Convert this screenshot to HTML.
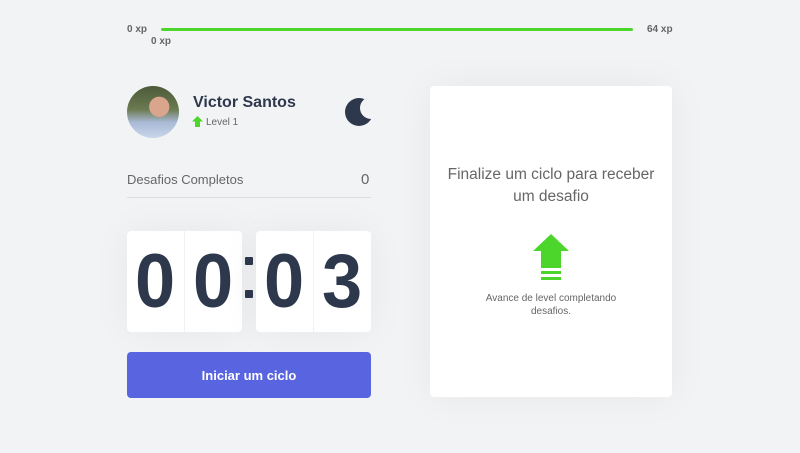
<!DOCTYPE html>
<html><head><style>
body{margin:0;width:800px;height:453px;background:#f2f3f5;font-family:"Liberation Sans",sans-serif;position:relative;overflow:hidden;color:#666}
.a{position:absolute}
.xp{font-size:10px;font-weight:bold;color:#666}
.box{background:#fff;border-radius:4px;box-shadow:0 0 40px rgba(0,0,0,.05);display:flex}
.box div{flex:1;display:flex;align-items:center;justify-content:center;font-size:76px;color:#2e384d;font-weight:bold;font-family:"Liberation Sans",sans-serif}
.box div span{display:inline-block;transform:scaleX(.95)}
.box div:first-child{border-right:1px solid #f0f1f3}
</style></head><body>
<div class="a xp" style="left:127px;top:24px">0 xp</div>
<div class="a" style="left:161px;top:28px;width:472px;height:3px;background:#4cd62b;border-radius:2px"></div>
<div class="a xp" style="left:151px;top:36px">0 xp</div>
<div class="a xp" style="left:647px;top:24px">64 xp</div>

<div class="a" style="left:127px;top:86px;width:52px;height:52px;border-radius:50%;background:radial-gradient(circle at 62% 40%,#d9a58c 0 22%,transparent 23%),linear-gradient(180deg,#4c5a3a 0%,#6b7a50 45%,#a9b9d6 70%,#c9d6ea 100%)"></div>
<div class="a" style="left:193px;top:94px;font-size:16px;font-weight:bold;color:#2e384d">Victor Santos</div>
<svg class="a" style="left:192px;top:116px" width="11" height="11" viewBox="0 0 11 11"><path d="M5.5 0L11 5.5H8V11H3V5.5H0Z" fill="#4cd62b"/></svg>
<div class="a" style="left:206px;top:117px;font-size:10px;color:#666">Level 1</div>
<svg class="a" style="left:344px;top:96px" width="32" height="32" viewBox="0 0 32 32"><defs><mask id="m"><rect width="32" height="32" fill="#fff"/><circle cx="27" cy="12" r="11" fill="#000"/></mask></defs><circle cx="15" cy="16" r="14" fill="#2e384d" mask="url(#m)"/></svg>

<div class="a" style="left:127px;top:172px;font-size:13px;color:#666">Desafios Completos</div>
<div class="a" style="left:361px;top:171px;font-size:15px;color:#666">0</div>
<div class="a" style="left:127px;top:197px;width:244px;height:1px;background:#dcdde0"></div>

<div class="a box" style="left:127px;top:231px;width:115px;height:101px"><div><span>0</span></div><div><span>0</span></div></div>
<div class="a" style="left:245px;top:257px;width:8px;height:8px;background:#2e384d;border-radius:1px"></div>
<div class="a" style="left:245px;top:290px;width:8px;height:8px;background:#2e384d;border-radius:1px"></div>
<div class="a box" style="left:256px;top:231px;width:115px;height:101px"><div><span>0</span></div><div><span>3</span></div></div>

<div class="a" style="left:127px;top:352px;width:244px;height:46px;background:#5965e0;border-radius:4px;color:#fff;font-size:13px;font-weight:bold;display:flex;align-items:center;justify-content:center">Iniciar um ciclo</div>

<div class="a" style="left:430px;top:86px;width:242px;height:311px;background:#fff;border-radius:4px;box-shadow:0 0 40px rgba(0,0,0,.05)"></div>
<div class="a" style="left:430px;top:164px;width:242px;text-align:center;font-size:15.5px;line-height:22px;color:#666">Finalize um ciclo para receber<br>um desafio</div>
<svg class="a" style="left:533px;top:234px" width="36" height="47" viewBox="0 0 36 47"><path d="M18 0L36 17H28V34H8V17H0Z" fill="#4cd62b"/><rect x="8" y="37" width="20" height="3" fill="#4cd62b"/><rect x="8" y="43" width="20" height="3" fill="#4cd62b"/></svg>
<div class="a" style="left:430px;top:292px;width:242px;text-align:center;font-size:10px;line-height:13px;color:#666">Avance de level completando<br>desafios.</div>
</body></html>
